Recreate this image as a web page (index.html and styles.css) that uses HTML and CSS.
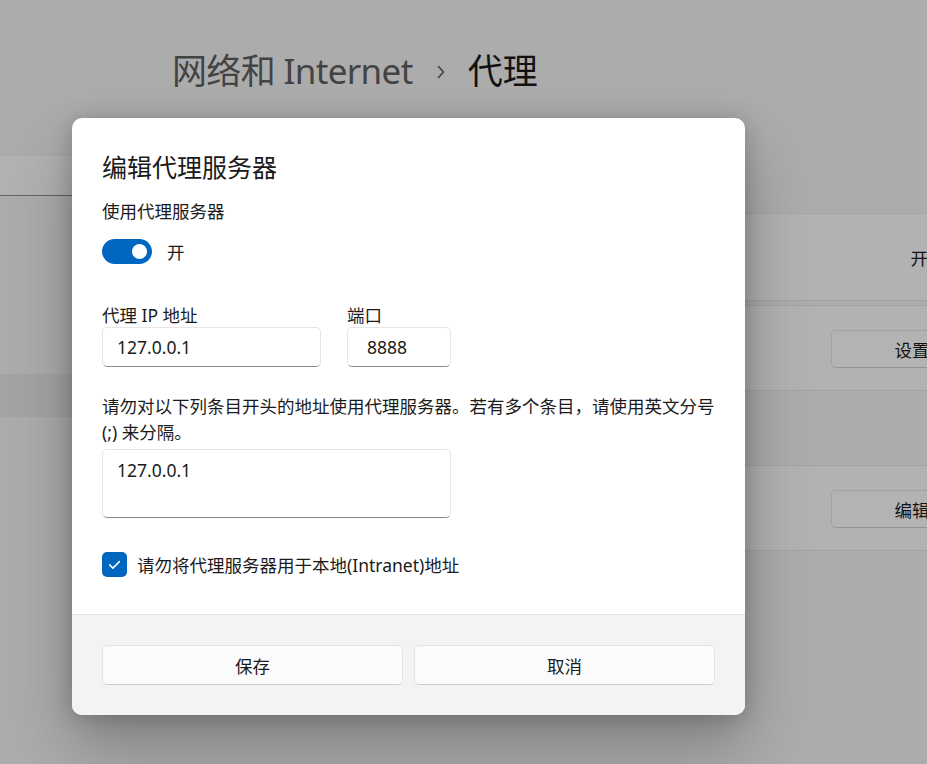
FILE: index.html
```html
<!DOCTYPE html>
<html lang="zh-CN">
<head>
<meta charset="utf-8">
<title>代理</title>
<link rel="stylesheet" href="styles.css">
</head>
<body>
<div class="page">
  <header class="crumb">
    <span class="crumb-parent">网络和 Internet</span>
    <svg class="crumb-sep" width="10" height="16" viewBox="0 0 10 16"><path d="M2.5 2.5 L7.5 8 L2.5 13.5" fill="none" stroke="#5c5c5c" stroke-width="1.6" stroke-linecap="round" stroke-linejoin="round"/></svg>
    <span class="crumb-current">代理</span>
  </header>
  <div class="main">
    <nav class="nav">
      <div class="search"></div>
      <div class="nav-item"></div>
    </nav>
    <section class="content">
      <div class="card card-a">
        <span class="card-state">开</span>
        <span class="card-toggle"></span>
      </div>
      <div class="card card-b">
        <span class="card-btn">设置</span>
      </div>
      <div class="section-gap"></div>
      <div class="card card-d">
        <span class="card-btn">编辑</span>
      </div>
    </section>
  </div>
</div>

<div class="scrim"></div>

<div class="dialog" role="dialog">
  <div class="dialog-body">
    <h1 class="dialog-title">编辑代理服务器</h1>
    <div class="label">使用代理服务器</div>
    <div class="toggle-row">
      <span class="toggle"><span class="knob"></span></span>
      <span class="toggle-text">开</span>
    </div>
    <div class="fields">
      <div class="field field-ip">
        <div class="label">代理 IP 地址</div>
        <div class="input">127.0.0.1</div>
      </div>
      <div class="field field-port">
        <div class="label">端口</div>
        <div class="input">8888</div>
      </div>
    </div>
    <p class="desc">请勿对以下列条目开头的地址使用代理服务器。若有多个条目，请使用英文分号<br>(;) 来分隔。</p>
    <div class="textarea">127.0.0.1</div>
    <div class="check-row">
      <span class="checkbox">
        <svg width="25" height="25" viewBox="0 0 25 25"><path d="M7.6 12.9 L10.9 16.1 L17.4 9.6" fill="none" stroke="#ffffff" stroke-width="1.5" stroke-linecap="round" stroke-linejoin="round"/></svg>
      </span>
      <span class="check-text">请勿将代理服务器用于本地(Intranet)地址</span>
    </div>
  </div>
  <div class="dialog-footer">
    <button class="btn">保存</button>
    <button class="btn">取消</button>
  </div>
</div>
</body>
</html>
```

FILE: styles.css
```css
html, body {
  margin: 0;
  padding: 0;
  width: 927px;
  height: 764px;
  overflow: hidden;
}

body {
  background: #f3f3f3;
  font-family: "Noto Sans", "Noto Sans CJK SC", sans-serif;
  color: #1b1b1b;
  position: relative;
}

.page {
  width: 1100px;
}

.crumb {
  display: flex;
  align-items: center;
  padding: 48px 0 0 172px;
  height: 46px;
  font-size: 35px;
  line-height: 46px;
}

.crumb-parent {
  color: #5f5f5f;
  letter-spacing: -0.65px;
}

.crumb-sep {
  margin: 2px 22px 0 23px;
}

.crumb-current {
  color: #1a1a1a;
}

.main {
  display: flex;
}

.nav {
  width: 150px;
  padding-top: 61px;
  display: flex;
  flex-direction: column;
}

.search {
  height: 39px;
  background: #fbfbfb;
  border-top: 1px solid #ececec;
  border-bottom: 1px solid #8a8a8a;
}

.nav-item {
  margin-top: 178px;
  height: 43px;
  background: #e8e8e8;
}

.content {
  margin-left: 22px;
  width: 842px;
  padding-top: 119px;
  display: flex;
  flex-direction: column;
}

.card {
  background: #fbfbfb;
  border: 1px solid #e6e6e6;
  border-radius: 5px;
  display: flex;
  align-items: center;
  justify-content: flex-end;
  padding-right: 20px;
  font-size: 17.5px;
}

.card-a {
  height: 86px;
}

.card-b {
  margin-top: 4px;
  height: 84px;
}

.card-d {
  height: 84px;
}

.section-gap {
  height: 74px;
}

.card-state {
  margin-right: 15px;
}

.card-toggle {
  width: 50px;
  height: 25px;
  border-radius: 13px;
  background: #0067c0;
}

.card-btn {
  width: 160px;
  height: 36px;
  border: 1px solid #e3e3e3;
  border-bottom-color: #cfcfcf;
  border-radius: 5px;
  background: #fdfdfd;
  display: flex;
  align-items: center;
  justify-content: center;
  margin-top: 2px;
}

.scrim {
  position: absolute;
  inset: 0;
  background: rgba(0, 0, 0, 0.29);
}

.dialog {
  position: absolute;
  left: 72px;
  top: 118px;
  width: 673px;
  background: #ffffff;
  border-radius: 10px;
  overflow: hidden;
  box-shadow: 0 32px 64px rgba(0, 0, 0, 0.26), 0 2px 21px rgba(0, 0, 0, 0.2);
}

.dialog-body {
  padding: 32px 30px 37px 30px;
  font-size: 17.5px;
  line-height: 24px;
}

.dialog-title {
  margin: 0;
  font-size: 25px;
  line-height: 34px;
  font-weight: 400;
  color: #1a1a1a;
}

.label {
  margin-top: 15px;
  height: 24px;
}

.toggle-row {
  margin-top: 16px;
  display: flex;
  align-items: center;
  height: 25px;
}

.toggle {
  width: 50px;
  height: 25px;
  border-radius: 13px;
  background: #0067c0;
  display: flex;
  align-items: center;
  justify-content: flex-end;
  box-sizing: border-box;
  padding-right: 5px;
}

.knob {
  width: 15px;
  height: 15px;
  border-radius: 50%;
  background: #ffffff;
}

.toggle-text {
  margin-left: 15px;
}

.fields {
  margin-top: 39px;
  display: flex;
  gap: 26px;
}

.fields .label {
  margin-top: 0;
}

.field-ip {
  width: 219px;
}

.field-port {
  width: 104px;
}

.input {
  height: 40px;
  box-sizing: border-box;
  border: 1px solid #e5e5e5;
  border-bottom-color: #8a8a8a;
  border-radius: 5px;
  padding: 0 14px;
  display: flex;
  align-items: center;
  line-height: 24px;
}

.field-ip .input {
  padding-left: 14px;
}

.field-port .input {
  padding-left: 19px;
}

.desc {
  margin: 26px 0 0 0;
  line-height: 26px;
  white-space: nowrap;
}

.textarea {
  margin-top: 4px;
  width: 349px;
  height: 69px;
  box-sizing: border-box;
  border: 1px solid #e5e5e5;
  border-bottom-color: #8a8a8a;
  border-radius: 5px;
  padding: 8px 14px;
  line-height: 24px;
}

.check-row {
  margin-top: 34px;
  display: flex;
  align-items: center;
  height: 25px;
}

.checkbox {
  width: 25px;
  height: 25px;
  border-radius: 5px;
  background: #0067c0;
  display: flex;
}

.check-text {
  margin-left: 10px;
}

.dialog-footer {
  background: #f3f3f3;
  border-top: 1px solid #e5e5e5;
  padding: 30px 30px 30px 30px;
  display: grid;
  grid-template-columns: 1fr 1fr;
  gap: 11px;
}

.btn {
  height: 40px;
  font-family: "Noto Sans", "Noto Sans CJK SC", sans-serif;
  font-size: 17.5px;
  color: #1b1b1b;
  background: #fbfbfb;
  border: 1px solid #e3e3e3;
  border-bottom-color: #cdcdcd;
  border-radius: 5px;
  padding: 0;
}
```
